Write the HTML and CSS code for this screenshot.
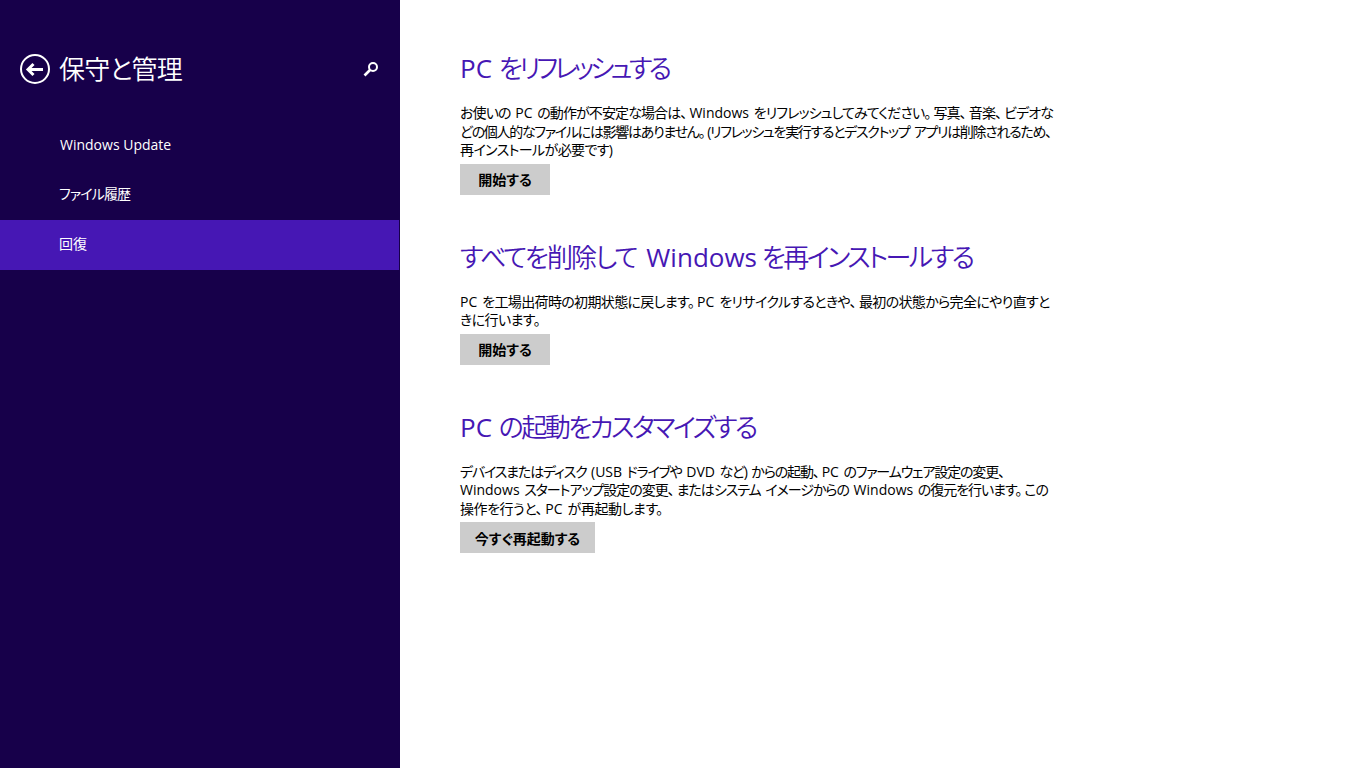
FILE: index.html
```html
<!DOCTYPE html>
<html lang="ja">
  <head>
    <meta charset="UTF-8">
    <title>保守と管理</title>
    <link rel="stylesheet" href="styles.css">
  </head>
  <body>
    <div id="sidebar">
      <div class="side-head">
        <svg class="back" width="32" height="32" viewBox="0 0 32 32">
          <circle cx="16" cy="16" r="14" fill="none" stroke="#fff" stroke-width="2"/>
          <path d="M9 16.5H24M14.5 11L9 16.5L14.5 22" fill="none" stroke="#fff" stroke-width="3"/>
        </svg>
        <h1>保守と管理</h1>
        <svg class="search" width="16" height="16" viewBox="0 0 16 16">
          <circle cx="10" cy="6" r="4" fill="none" stroke="#fff" stroke-width="2"/>
          <path d="M7 9L1.5 14.5" fill="none" stroke="#fff" stroke-width="2.6"/>
        </svg>
      </div>
      <div class="nav-item en-item">Windows Update</div>
      <div class="nav-item jp">ファイル履歴</div>
      <div class="nav-item jp selected">回復</div>
    </div>
    <div id="main">
      <div class="section">
        <h2 class="h-a"><span class="en">PC </span>をリフレッシュする</h2>
        <p>
          <span class="ln ls09">お使いの <span class="en">PC</span> の動作が不安定な場合は<span class="pn">、</span><span class="en">Windows</span> をリフレッシュしてみてください<span class="pn">。</span>写真<span class="pn">、</span>音楽<span class="pn">、</span>ビデオな</span>
          <span class="ln ls13">どの個人的なファイルには影響はありません<span class="pn">。</span>(リフレッシュを実行するとデスクトップ アプリは削除されるため、</span>
          <span class="ln ls06">再インストールが必要です)</span>
        </p>
        <button class="wide">開始する</button>
      </div>
      <div class="section">
        <h2 class="h-b">すべてを削除して <span class="en">Windows</span> <span class="h-b-tail">を再インストールする</span></h2>
        <p>
          <span class="ln ls065"><span class="en">PC</span> を工場出荷時の初期状態に戻します<span class="pn">。</span><span class="en">PC</span> をリサイクルするときや<span class="pn">、</span>最初の状態から完全にやり直すと</span>
          <span class="ln ls06">きに行います。</span>
        </p>
        <button class="wide">開始する</button>
      </div>
      <div class="section">
        <h2 class="h-c"><span class="en">PC </span>の起動をカスタマイズする</h2>
        <p>
          <span class="ln ls115">デバイスまたはディスク <span class="en">(USB</span> ドライブや <span class="en">DVD</span> など) からの起動<span class="pn">、</span><span class="en">PC</span> のファームウェア設定の変更、</span>
          <span class="ln ls10"><span class="en">Windows</span> スタートアップ設定の変更<span class="pn">、</span>またはシステム イメージからの <span class="en">Windows</span> の復元を行います<span class="pn">。</span>この</span>
          <span class="ln ls045">操作を行うと<span class="pn">、</span><span class="en">PC</span> が再起動します。</span>
        </p>
        <button>今すぐ再起動する</button>
      </div>
    </div>
  </body>
</html>
```
FILE: styles.css
```css
html, body {
  margin: 0;
  height: 768px;
  overflow: hidden;
}
body {
  display: flex;
  background-color: #fff;
  font-family: "Open Sans", "Noto Sans CJK JP", sans-serif;
  font-feature-settings: "palt";
}
#sidebar {
  width: 400px;
  height: 768px;
  background-color: #17004a;
  color: #fff;
}
.side-head {
  display: flex;
  align-items: center;
  height: 40px;
  padding: 49px 20px 31px 19px;
}
.back {
  margin-right: 8px;
}
h1 {
  flex: 1;
  margin: 0;
  font-size: 26px;
  font-weight: 350;
  line-height: 40px;
  letter-spacing: -0.8px;
}
.search {
  margin-right: 1px;
}
.nav-item {
  width: 340px;
  height: 50px;
  padding-left: 59px;
  font-size: 14px;
  line-height: 50px;
}
.en-item {
  padding-left: 60px;
}
.jp {
  line-height: 48px;
  letter-spacing: -0.9px;
}
.selected {
  background-color: #4617b4;
  letter-spacing: 0;
}
#main {
  padding: 48px 0 0 60px;
}
.section {
  margin-bottom: 42px;
}
h2 {
  margin: 0 0 16px;
  font-size: 26px;
  font-weight: 350;
  line-height: 40px;
  color: #4617b4;
}
h2 .en {
  font-weight: 400;
}
.h-a {
  letter-spacing: -3.75px;
}
.h-b {
  letter-spacing: -1.9px;
  word-spacing: 5px;
}
.h-b-tail {
  margin-left: -5px;
  letter-spacing: -2.5px;
}
.h-c {
  letter-spacing: -2.55px;
}
p {
  margin: 0 0 4px;
  font-size: 14px;
  line-height: 18.5px;
  word-spacing: 2px;
  color: #000;
}
.ln {
  display: block;
}
.ls045 {
  letter-spacing: -0.45px;
}
.ls06 {
  letter-spacing: -0.6px;
}
.ls065 {
  letter-spacing: -0.65px;
}
.ls09 {
  letter-spacing: -0.9px;
}
.ls10 {
  letter-spacing: -1.03px;
}
.ls115 {
  letter-spacing: -1.15px;
}
.ls13 {
  letter-spacing: -1.3px;
}
.en {
  letter-spacing: 0;
}
.pn {
  padding-right: 3px;
}
button {
  display: block;
  width: 135px;
  height: 31px;
  padding: 0;
  border: 0;
  background-color: #cccccc;
  color: #000;
  font-family: inherit;
  font-feature-settings: inherit;
  font-size: 14px;
  font-weight: 700;
}
.wide {
  width: 90px;
}
```
